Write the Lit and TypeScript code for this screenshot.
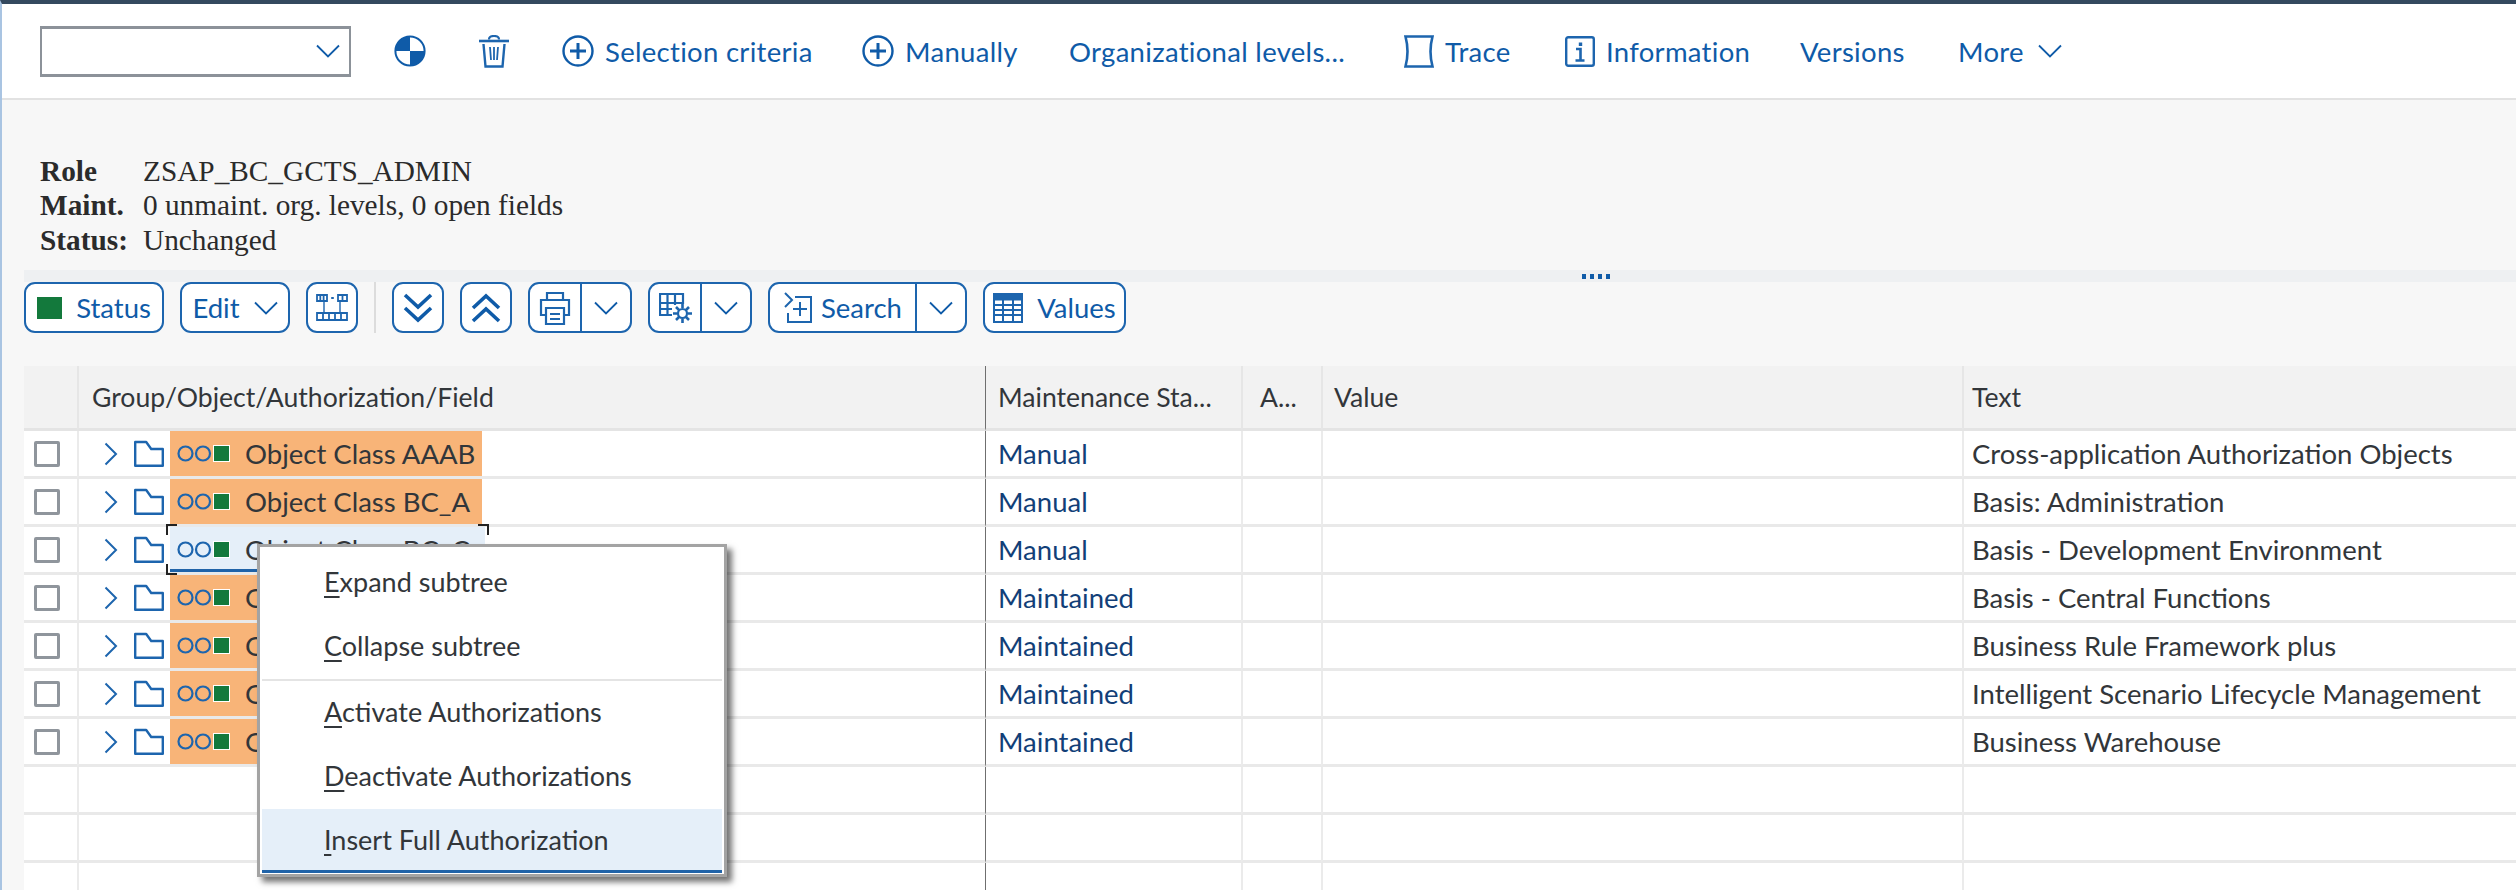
import { LitElement, html, css } from 'lit';
import { customElement } from 'lit/decorators.js';

const chevDown = html`<svg class="chev" width="24" height="14" viewBox="0 0 24 14"><path d="M1 1.500 12 12.500 23 1.500" fill="none" stroke="currentColor" stroke-width="1.800"/></svg>`;
const plusCircle = html`<svg width="32" height="32" viewBox="0 0 32 32" fill="none" stroke="currentColor"><circle cx="16" cy="16" r="14.500" stroke-width="2.400"/><path d="M16 8v16M8 16h16" stroke-width="3"/></svg>`;

interface Row {
  name: string;
  status: string;
  text: string;
  focused?: boolean;
}

const ROWS: Row[] = [
  { name: 'Object Class AAAB', status: 'Manual', text: 'Cross-application Authorization Objects' },
  { name: 'Object Class BC_A', status: 'Manual', text: 'Basis: Administration' },
  { name: 'Object Class BC_C', status: 'Manual', text: 'Basis - Development Environment', focused: true },
  { name: 'Object Class BC_Z', status: 'Maintained', text: 'Basis - Central Functions' },
  { name: 'Object Class BRFP', status: 'Maintained', text: 'Business Rule Framework plus' },
  { name: 'Object Class ISLM', status: 'Maintained', text: 'Intelligent Scenario Lifecycle Management' },
  { name: 'Object Class RS', status: 'Maintained', text: 'Business Warehouse' },
];

@customElement('app-root')
export class AppRoot extends LitElement {
  static override styles = css`
    :host {
      display: block;
      position: relative;
      width: 2516px;
      height: 890px;
      overflow: hidden;
      background: #f7f7f7;
      font-family: 'Lato', 'Noto Sans', sans-serif;
      font-size: 27.5px;
      color: #32363a;
      --blue: #0f5ba8;
    }
    .frame {
      height: 100%;
      border-top: 4px solid #34495f;
      border-left: 2px solid #a9c4e2;
      box-sizing: border-box;
    }

    /* top toolbar */
    .toolbar {
      height: 94px;
      padding-left: 38px;
      background: #fff;
      border-bottom: 2px solid #e2e2e2;
      display: grid;
      grid-template-columns: 301px 32px 30px 247px 154px 282px 108px 182px 105px 102px;
      column-gap: 53px;
      align-items: center;
      color: var(--blue);
      letter-spacing: 0.3px;
    }
    .dropdown {
      box-sizing: border-box;
      height: 51px;
      margin-right: -10px;
      border: 2px solid #8c9299;
      border-top-width: 3px;
      border-bottom-width: 3px;
      display: flex;
      align-items: center;
      justify-content: flex-end;
      padding-right: 9px;
    }
    .tool {
      display: flex;
      align-items: center;
      gap: 11px;
      white-space: nowrap;
    }
    .tool svg {
      flex: none;
    }
    .tool.more {
      gap: 14px;
    }

    /* role header */
    .info {
      height: 170px;
      box-sizing: border-box;
      padding: 54px 0 0 38px;
      font-family: 'Liberation Serif', serif;
      font-size: 29.3px;
      line-height: 34.300px;
      color: #2b2b2b;
      display: grid;
      grid-template-columns: 103px 1fr;
      align-content: start;
    }

    /* splitter band */
    .band {
      height: 12px;
      margin-left: 22px;
      padding-left: 1558px;
      background: #eef0f2;
      display: flex;
      align-items: center;
      gap: 4px;
    }
    .band i {
      width: 4px;
      height: 5px;
      background: var(--blue);
    }

    /* button row */
    .buttons {
      margin-left: 22px;
      height: 51px;
      display: grid;
      grid-template-columns: 140px 110px 52px 2px 52px 52px 104px 104px 199px 143px;
      column-gap: 16px;
      color: var(--blue);
    }
    .btn {
      box-sizing: border-box;
      border: 2px solid #1d65ae;
      border-radius: 11px;
      background: #fff;
      display: flex;
      align-items: center;
      justify-content: center;
      gap: 14px;
      white-space: nowrap;
      overflow: hidden;
    }
    .btn .part {
      height: 100%;
      display: flex;
      align-items: center;
      justify-content: center;
      gap: 8px;
    }
    .btn .part + .part {
      box-sizing: border-box;
      border-left: 2px solid #1d65ae;
      width: 50px;
      flex: none;
    }
    .btn.split {
      gap: 0;
    }
    .btn.split .part:first-child {
      flex: 1;
    }
    .status-dot {
      width: 25px;
      height: 22px;
      background: #13793c;
    }
    .sep {
      background: #dcdcdc;
    }

    /* table */
    .table {
      margin: 33px 0 0 22px;
      display: grid;
      grid-template-columns: 53px 908px 256px 80px 641px 1fr;
      position: relative;
      background: #fff;
    }
    .head {
      height: 62px;
      background: #f2f2f2;
      border-bottom: 3px solid #e4e4e4;
      border-left: 2px solid #e6e6e6;
      display: flex;
      align-items: center;
      padding-left: 11px;
      white-space: nowrap;
      font-size: 26.6px;
    }
    .head:first-child {
      border-left: 0;
      padding: 0;
    }
    .head.short {
      padding-left: 17px;
    }
    .head.group {
      padding-left: 13px;
    }
    .head.last,
    .cell.last {
      padding-left: 8px;
    }
    .cell {
      height: 45px;
      background: #fff;
      border-bottom: 3px solid #e9e9e9;
      border-left: 2px solid #ebebeb;
      display: flex;
      align-items: center;
      padding-left: 11px;
      white-space: nowrap;
      min-width: 0;
    }
    .cell.sel {
      border-left: 0;
      padding-left: 10px;
    }
    .cell.status {
      color: #123f78;
    }
    .cell.tree {
      padding: 0;
    }
    .splitter {
      border-left: 1px solid #6f6f6f !important;
      padding-left: 12px;
    }
    .check {
      box-sizing: border-box;
      width: 26px;
      height: 26px;
      border: 3px solid #8f959c;
      border-radius: 2px;
      background: #fff;
    }
    .twisty {
      margin-left: 25px;
      color: #1d65ae;
      flex: none;
    }
    .folder {
      margin-left: 16px;
      margin-right: 6px;
      color: #1d65ae;
      flex: none;
    }
    .node {
      position: relative;
      width: 312px;
      height: 100%;
      background: #f8b478;
      display: flex;
      align-items: center;
      padding-left: 7px;
      box-sizing: border-box;
      color: #32363a;
      flex: none;
    }
    .node.focused {
      background: #e5eff9;
      box-shadow: inset 0 -3px 0 #2063a8;
      width: 315px;
    }
    .node.focused::before,
    .node.focused::after {
      content: '';
      position: absolute;
      left: -4px;
      right: -4px;
      height: 11px;
    }
    .node.focused::before {
      top: -3px;
      background:
        linear-gradient(#222, #222) left top / 11px 2px no-repeat,
        linear-gradient(#222, #222) left top / 2px 11px no-repeat,
        linear-gradient(#222, #222) right top / 11px 2px no-repeat,
        linear-gradient(#222, #222) right top / 2px 11px no-repeat;
    }
    .node.focused::after {
      bottom: -3px;
      background:
        linear-gradient(#222, #222) left bottom / 11px 2px no-repeat,
        linear-gradient(#222, #222) left bottom / 2px 11px no-repeat;
    }
    .lamp {
      flex: none;
      margin-right: 15px;
    }

    /* context menu */
    .menu {
      position: absolute;
      left: 257px;
      top: 544px;
      box-sizing: border-box;
      width: 470px;
      height: 333px;
      background: #fff;
      border: 3px solid #a3a3a3;
      box-shadow: 5px 5px 6px rgba(0, 0, 0, 0.55);
      padding: 4px 2px 0;
      display: flex;
      flex-direction: column;
      font-size: 27px;
    }
    .item {
      height: 64px;
      box-sizing: border-box;
      padding: 0 0 3px 62px;
      flex: none;
      display: flex;
      align-items: center;
      white-space: nowrap;
    }
    .item u {
      text-underline-offset: 4px;
    }
    .item.active {
      background: #e5eff9;
      border-bottom: 3px solid #2063a8;
      padding-bottom: 0;
    }
    .menu hr {
      margin: 0;
      border: 0;
      height: 2px;
      background: #e4e4e4;
      flex: none;
    }
  `;

  private renderRow(r: Row) {
    return html`
      <div class="cell sel"><div class="check"></div></div>
      <div class="cell tree">
        <svg class="twisty" width="14" height="24" viewBox="0 0 14 24"><path d="M1.500 1.500 12 12 1.500 22.500" fill="none" stroke="currentColor" stroke-width="2"/></svg>
        <svg class="folder" width="30" height="27" viewBox="0 0 30 27"><path d="M1.200 2h11l5 7h11.600v16.800H1.200z" fill="none" stroke="currentColor" stroke-width="2.400" stroke-linejoin="round"/></svg>
        <div class="node ${r.focused ? 'focused' : ''}">
          <svg class="lamp" width="53" height="17" viewBox="0 0 53 17">
            <circle cx="8.500" cy="8.500" r="7" fill="none" stroke="#1d65ae" stroke-width="2.200"/>
            <circle cx="26" cy="8.500" r="7" fill="none" stroke="#1d65ae" stroke-width="2.200"/>
            <rect x="36" y="0" width="17" height="17" fill="#fff"/>
            <rect x="37" y="1" width="15" height="15" fill="#13793c"/>
          </svg>
          ${r.name}
        </div>
      </div>
      <div class="cell status splitter">${r.status}</div>
      <div class="cell"></div>
      <div class="cell"></div>
      <div class="cell last">${r.text}</div>
    `;
  }

  private renderEmptyRow() {
    return html`
      <div class="cell sel"></div>
      <div class="cell"></div>
      <div class="cell splitter"></div>
      <div class="cell"></div>
      <div class="cell"></div>
      <div class="cell"></div>
    `;
  }

  override render() {
    return html`
      <div class="frame">
        <div class="toolbar">
          <div class="dropdown">${chevDown}</div>
          <svg width="32" height="32" viewBox="0 0 32 32">
            <circle cx="16" cy="16" r="14.600" fill="#fff" stroke="#0f5ba8" stroke-width="2"/>
            <path d="M16 16V1.400A14.600 14.600 0 0 0 1.400 16zM16 16v14.600A14.600 14.600 0 0 0 30.600 16z" fill="#0f5ba8"/>
          </svg>
          <svg width="30" height="33" viewBox="0 0 30 33" fill="none" stroke="#1d65ae">
            <path d="M0 6h30" stroke-width="2.600"/>
            <path d="M10 4.500Q10 1 15 1t5 3.500" stroke-width="2.200"/>
            <path d="M4.500 9l2 22.500h17l2-22.500" stroke-width="2.400"/>
            <path d="M11 12l1 13M15 12v13M19 12l-1 13" stroke-width="1.800"/>
          </svg>
          <div class="tool">${plusCircle}<span>Selection criteria</span></div>
          <div class="tool">${plusCircle}<span>Manually</span></div>
          <div class="tool">Organizational levels...</div>
          <div class="tool">
            <svg width="30" height="33" viewBox="0 0 30 33"><path d="M1.500 1.500h27q-4 15 0 30h-27q4-15 0-30z" fill="none" stroke="#1d65ae" stroke-width="2.600"/></svg>
            <span>Trace</span>
          </div>
          <div class="tool">
            <svg width="30" height="31" viewBox="0 0 30 31" fill="none" stroke="#1d65ae"><rect x="1.200" y="1.200" width="27.600" height="28.600" rx="2" stroke-width="2.400"/><path d="M11 13h4.500v11M10.500 24.500h9" stroke-width="2.600"/><path d="M15.500 6.500v3.500" stroke-width="3.400"/></svg>
            <span>Information</span>
          </div>
          <div class="tool">Versions</div>
          <div class="tool more"><span>More</span>${chevDown}</div>
        </div>

        <div class="info">
          <b>Role</b><span>ZSAP_BC_GCTS_ADMIN</span>
          <b>Maint.</b><span>0 unmaint. org. levels, 0 open fields</span>
          <b>Status:</b><span>Unchanged</span>
        </div>

        <div class="band"><i></i><i></i><i></i><i></i></div>

        <div class="buttons">
          <div class="btn"><div class="status-dot"></div><span>Status</span></div>
          <div class="btn"><span>Edit</span>${chevDown}</div>
          <div class="btn">
            <svg width="32" height="27" viewBox="0 0 32 27" fill="none" stroke="#1d65ae" stroke-width="1.800">
              <path d="M1 1h10v6H1zM4.300 1v6M7.600 1v6M22 1h9v6h-9zM26.500 1v6"/>
              <path d="M16.500 3v2" stroke-width="2.600"/>
              <path d="M8 7v11M24 7v11" stroke-width="1.400"/>
              <path d="M1 19h30v7H1zM7 19v7M13 19v7M19 19v7M25 19v7"/>
            </svg>
          </div>
          <div class="sep"></div>
          <div class="btn">
            <svg width="30" height="30" viewBox="0 0 30 30" fill="none" stroke="#0f5ba8" stroke-width="3.600"><path d="M2 2l13 12L28 2M2 15l13 12 13-12"/></svg>
          </div>
          <div class="btn">
            <svg width="30" height="30" viewBox="0 0 30 30" fill="none" stroke="#0f5ba8" stroke-width="3.600"><path d="M2 15L15 3l13 12M2 28l13-12 13 12"/></svg>
          </div>
          <div class="btn split">
            <div class="part">
              <svg width="32" height="34" viewBox="0 0 32 34" fill="none" stroke="#1d65ae" stroke-width="2.200">
                <path d="M8 9V2h16v7"/>
                <path d="M7 24H2V9h28v15h-5"/>
                <path d="M7 17h18v16H7z"/>
                <path d="M11 23h10M11 28h10"/>
              </svg>
            </div>
            <div class="part">${chevDown}</div>
          </div>
          <div class="btn split">
            <div class="part">
              <svg width="33" height="30" viewBox="0 0 33 30" fill="none" stroke="#1d65ae" stroke-width="2.200">
                <path d="M1 1h23v9H1zM8.500 1v21M16 1v11M1 10v12h12M1 16h12"/>
                <circle cx="23.500" cy="20.500" r="4.500"/>
                <path d="M23.500 11v4M23.500 26v4M14 20.500h4M29 20.500h4M17 14l3 3M27 24l3 3M30 14l-3 3M20 24l-3 3" stroke-width="2.600"/>
              </svg>
            </div>
            <div class="part">${chevDown}</div>
          </div>
          <div class="btn split">
            <div class="part">
              <svg width="30" height="32" viewBox="0 0 30 32" fill="none" stroke="#1d65ae" stroke-width="2">
                <path d="M2 1l7 7-7 7M12 5h16v25H5v-9"/>
                <path d="M17 10v14M10 17h14"/>
              </svg>
              <span>Search</span>
            </div>
            <div class="part">${chevDown}</div>
          </div>
          <div class="btn">
            <svg width="30" height="30" viewBox="0 0 30 30" fill="none" stroke="#1d65ae" stroke-width="2">
              <path d="M1 1h28v28H1z"/>
              <path d="M1 4.500h28" stroke-width="6"/>
              <path d="M10 1v28M20 1v28"/>
              <path d="M1 12h28M1 17h28M1 22h28" stroke-width="1.800"/>
            </svg>
            <span>Values</span>
          </div>
        </div>

        <div class="table">
          <div class="head"></div>
          <div class="head group">Group/Object/Authorization/Field</div>
          <div class="head splitter">Maintenance Sta...</div>
          <div class="head short">A...</div>
          <div class="head">Value</div>
          <div class="head last">Text</div>
          ${ROWS.map((r) => this.renderRow(r))}
          ${[0, 1, 2].map(() => this.renderEmptyRow())}
        </div>
      </div>

      <div class="menu">
        <div class="item"><span><u>E</u>xpand subtree</span></div>
        <div class="item"><span><u>C</u>ollapse subtree</span></div>
        <hr />
        <div class="item"><span><u>A</u>ctivate Authorizations</span></div>
        <div class="item"><span><u>D</u>eactivate Authorizations</span></div>
        <div class="item active"><span><u>I</u>nsert Full Authorization</span></div>
      </div>
    `;
  }
}

declare global {
  interface HTMLElementTagNameMap {
    'app-root': AppRoot;
  }
}
